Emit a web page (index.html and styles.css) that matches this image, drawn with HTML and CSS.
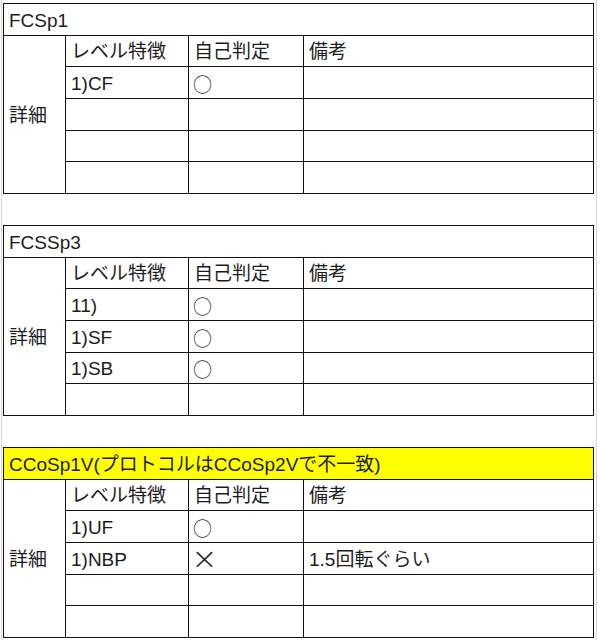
FILE: index.html
```html
<!DOCTYPE html>
<html lang="ja">
<head>
<meta charset="utf-8">
<title>自己判定表</title>
<link rel="stylesheet" href="styles.css">
</head>
<body>
<div class="sheet">
  <table class="grid">
    <colgroup><col class="c0"><col class="c1"><col class="c2"><col class="c3"></colgroup>
    <tr><td colspan="4" class="title">FCSp1</td></tr>
    <tr><td rowspan="5" class="label">詳細</td><td>レベル特徴</td><td>自己判定</td><td>備考</td></tr>
    <tr><td>1)CF</td><td class="mark">○</td><td></td></tr>
    <tr><td></td><td></td><td></td></tr>
    <tr><td></td><td></td><td></td></tr>
    <tr><td></td><td></td><td></td></tr>
  </table>

  <table class="grid">
    <colgroup><col class="c0"><col class="c1"><col class="c2"><col class="c3"></colgroup>
    <tr><td colspan="4" class="title">FCSSp3</td></tr>
    <tr><td rowspan="5" class="label">詳細</td><td>レベル特徴</td><td>自己判定</td><td>備考</td></tr>
    <tr><td>11)</td><td class="mark">○</td><td></td></tr>
    <tr><td>1)SF</td><td class="mark">○</td><td></td></tr>
    <tr><td>1)SB</td><td class="mark">○</td><td></td></tr>
    <tr><td></td><td></td><td></td></tr>
  </table>

  <table class="grid">
    <colgroup><col class="c0"><col class="c1"><col class="c2"><col class="c3"></colgroup>
    <tr><td colspan="4" class="title highlight">CCoSp1V(プロトコルはCCoSp2Vで不一致)</td></tr>
    <tr><td rowspan="5" class="label">詳細</td><td>レベル特徴</td><td>自己判定</td><td>備考</td></tr>
    <tr><td>1)UF</td><td class="mark">○</td><td></td></tr>
    <tr><td>1)NBP</td><td class="mark"><span class="cross">×</span></td><td>1.5回転ぐらい</td></tr>
    <tr><td></td><td></td><td></td></tr>
    <tr><td></td><td></td><td></td></tr>
  </table>
</div>
</body>
</html>
```
FILE: styles.css
```css
html, body {
  margin: 0;
  padding: 0;
  background: #ffffff;
}

body {
  font-family: "Liberation Sans", "Noto Sans CJK JP", sans-serif;
  font-size: 19px;
  color: #1c1c1c;
}

.sheet {
  margin-left: 1px;
  width: 593px;
  min-height: 640px;
  padding: 3px 0 0 1px;
  border-left: 1px solid #d6d6d6;
  border-right: 1px solid #d6d6d6;
  box-sizing: content-box;
}

.grid {
  border-collapse: collapse;
  table-layout: fixed;
  width: 591px;
  margin-bottom: 31px;
}

.grid .c0 { width: 62px; }
.grid .c1 { width: 123px; }
.grid .c2 { width: 115px; }
.grid .c3 { width: 290px; }

.grid tr {
  height: 31.67px;
}

.grid td {
  border: 1px solid #111111;
  padding: 3px 4px 0 5px;
  line-height: 22px;
  vertical-align: middle;
  white-space: nowrap;
  overflow: hidden;
}

.grid .highlight {
  background: #ffff00;
}

.grid .mark {
  font-family: "Noto Sans CJK JP", sans-serif;
  color: #333333;
  padding-left: 4px;
  overflow: visible;
}

.grid .cross {
  display: inline-block;
  font-family: "DejaVu Sans", sans-serif;
  font-weight: 300;
  font-size: 30px;
  line-height: 22px;
  color: #1c1c1c;
  margin-left: -1px;
  transform: scaleX(1.05);
}
```
